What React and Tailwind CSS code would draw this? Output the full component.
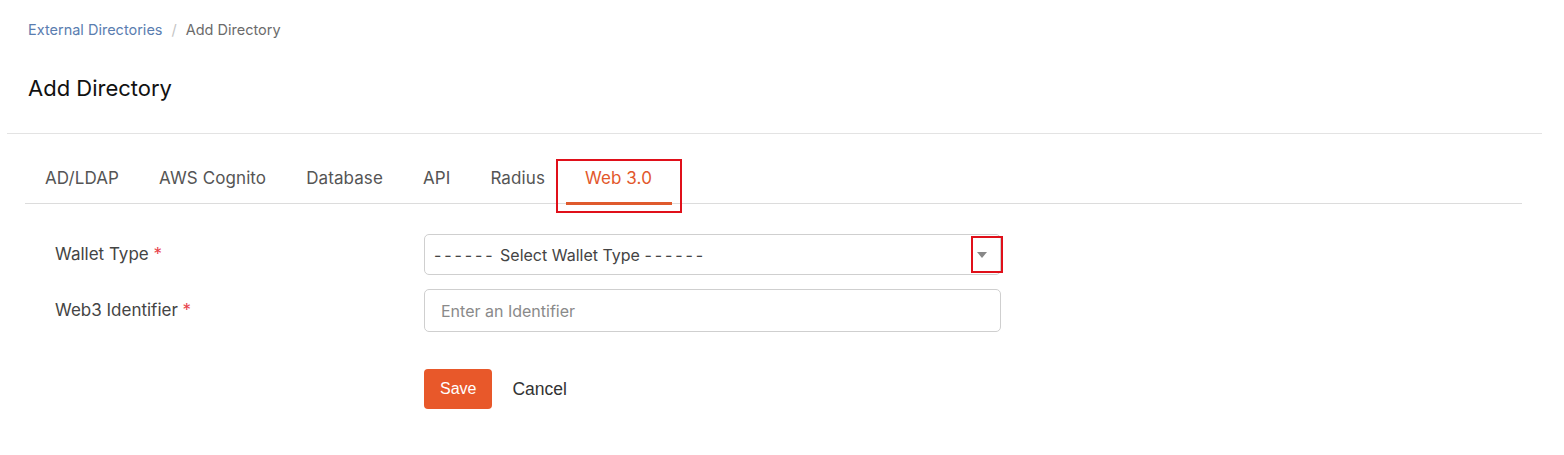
export default function App() {
  const tabs = ["AD/LDAP", "AWS Cognito", "Database", "API", "Radius", "Web 3.0"];
  const active = "Web 3.0";

  return (
    <div className="min-h-screen bg-white" style={{ fontFamily: "Inter, 'Noto Sans', sans-serif" }}>
      {/* Header */}
      <div className="px-7 pt-[21px]">
        <nav className="flex items-center text-[14.5px] leading-[18px] text-[#6b6b6b]">
          <span className="text-[#5a7db0]">External Directories</span>
          <span className="mx-[9px] text-[#c4c4c4]">/</span>
          <span>Add Directory</span>
        </nav>
        <h1 className="mt-[36px] text-[22px] leading-[26px] text-[#111]">Add Directory</h1>
      </div>
      <div className="mx-[7px] mt-[32px] mr-[22px] border-t border-[#e3e3e3]" />

      {/* Tabs */}
      <div className="mx-[25px] mr-[42px] mt-[25px]">
        <div className="flex border-b border-[#dcdcdc]">
          {tabs.map((t) => (
            <div key={t} className="relative">
              <div
                className={`px-5 pt-[8px] pb-[14px] text-[17px] leading-[22px] tracking-[0.1px] ${
                  t === active ? "text-[#e2572b]" : "text-[#555]"
                }`}
              >
                {t}
              </div>
              {t === active && (
                <>
                  <div className="absolute left-[1px] right-0 bottom-[-2px] h-[3px] bg-[#df5a2d]" />
                  <div className="absolute left-[-9px] right-[-10px] top-0 bottom-[-10px] border-2 border-[#e0101a]" />
                </>
              )}
            </div>
          ))}
        </div>

        {/* Form */}
        <div className="pl-[30px] pt-[30px]">
          <div className="flex items-center">
            <label className="w-[369px] text-[17px] text-[#444]">
              Wallet Type <span className="text-[#e8434b]">*</span>
            </label>
            <div className="relative flex h-[41px] w-[577px] items-center rounded-[5px] border border-[#cfcfcf] pl-[9px] pr-3">
              <span className="flex-1 text-[16px] text-[#444]">
                <span className="tracking-[2.9px]">------</span> Select Wallet Type{" "}
                <span className="tracking-[2.9px]">------</span>
              </span>
              <svg width="10" height="6" viewBox="0 0 10 6" className="mr-[1px]">
                <path d="M0 0 L10 0 L5 6 Z" fill="#888" />
              </svg>
              <div className="absolute right-[-3px] top-[1px] h-[37px] w-[32px] border-2 border-[#e0101a]" />
            </div>
          </div>

          <div className="mt-[14px] flex items-center">
            <label className="w-[369px] text-[17px] text-[#444]">
              Web3 Identifier <span className="text-[#e8434b]">*</span>
            </label>
            <input
              placeholder="Enter an Identifier"
              className="h-[43px] w-[577px] rounded-[5px] border border-[#cfcfcf] px-4 text-[16px] text-[#444] outline-none placeholder:text-[#8a8a8a]"
            />
          </div>

          <div className="mt-[37px] flex items-center pl-[369px]" style={{ fontFamily: "'Liberation Sans', Arial, sans-serif" }}>
            <button className="h-[40px] rounded-[4px] bg-[#e8582a] px-[16px] text-[16px] text-white">Save</button>
            <button className="ml-[5px] px-[15px] text-[17.5px] text-[#333]">Cancel</button>
          </div>
        </div>
      </div>
    </div>
  );
}
